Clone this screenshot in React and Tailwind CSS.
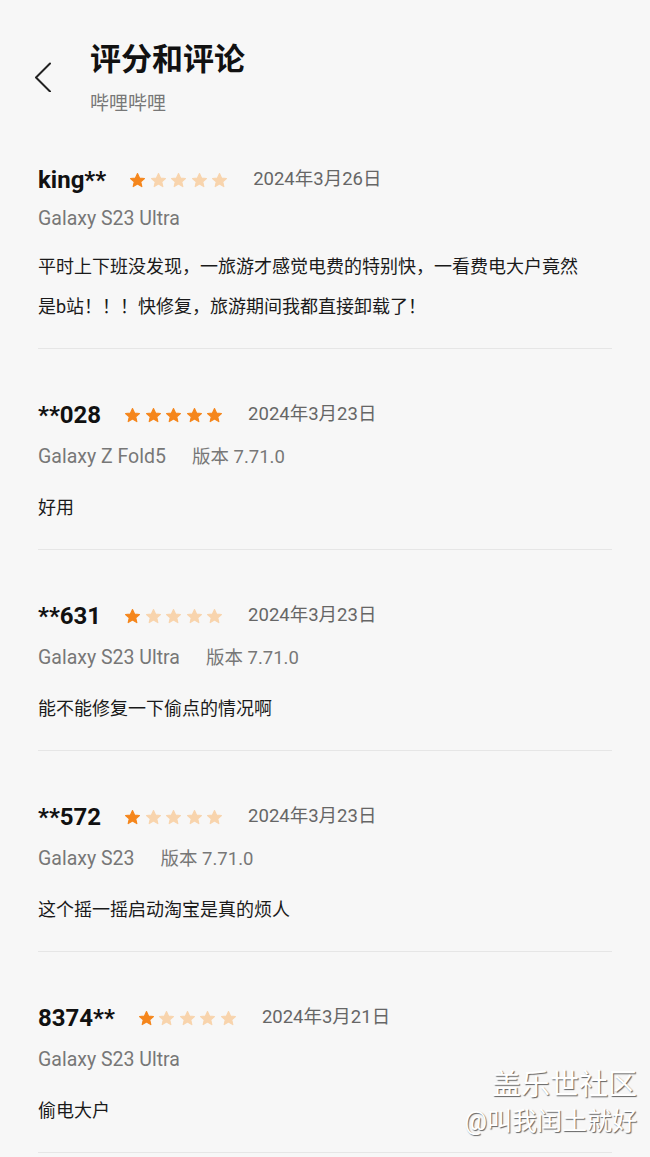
const reviews = [
  {
    id: 1,
    name: 'king**',
    rating: 1,
    date: '2024年3月26日',
    device: 'Galaxy S23 Ultra',
    text: ['平时上下班没发现，一旅游才感觉电费的特别快，一看费电大户竟然', '是b站！！！快修复，旅游期间我都直接卸载了！'],
  },
  { id: 2, name: '**028', rating: 5, date: '2024年3月23日', device: 'Galaxy Z Fold5', version: '版本 7.71.0', text: ['好用'] },
  { id: 3, name: '**631', rating: 1, date: '2024年3月23日', device: 'Galaxy S23 Ultra', version: '版本 7.71.0', text: ['能不能修复一下偷点的情况啊'] },
  { id: 4, name: '**572', rating: 1, date: '2024年3月23日', device: 'Galaxy S23', version: '版本 7.71.0', text: ['这个摇一摇启动淘宝是真的烦人'] },
  { id: 5, name: '8374**', rating: 1, date: '2024年3月21日', device: 'Galaxy S23 Ultra', text: ['偷电大户'] },
]

function Star({ filled }) {
  return (
    <svg width="17" height="17" viewBox="0 0 24 24" className="shrink-0">
      <path
        d="M12 2.2l2.9 6.3 6.9.7-5.2 4.6 1.5 6.8L12 17.1l-6.1 3.5 1.5-6.8-5.2-4.6 6.9-.7z"
        fill={filled ? '#f5861c' : '#f8d4ad'}
        stroke={filled ? '#f5861c' : '#f8d4ad'}
        strokeWidth="1.6"
        strokeLinejoin="round"
      />
    </svg>
  )
}

function Review({ review, first }) {
  return (
    <div className={`${first ? 'pt-[44px]' : 'pt-[48px]'} pb-[21px] border-b border-[#e6e6e6]`}>
      <div className="flex items-center h-[36px]">
        <span className="text-[24px] leading-[36px] font-bold text-[#111]">{review.name}</span>
        <div className="flex items-center gap-[3.5px] ml-[23px]">
          {[1, 2, 3, 4, 5].map((n) => (
            <Star key={n} filled={n <= review.rating} />
          ))}
        </div>
        <span className="ml-[25px] text-[18.5px] text-[#666]">{review.date}</span>
      </div>
      <div className={`flex items-baseline h-[28px] leading-[28px] ${first ? 'mt-[7px]' : 'mt-[10px]'} text-[#777]`}>
        <span className="text-[19.5px]">{review.device}</span>
        {review.version && <span className="ml-[26px] text-[18.5px]">{review.version}</span>}
      </div>
      <div className={`${first ? 'mt-[14px]' : 'mt-[17px]'} text-[18px] leading-[40px] text-[#1a1a1a]`}>
        {review.text.map((line, i) => (
          <div key={i}>{line}</div>
        ))}
      </div>
    </div>
  )
}

export default function App() {
  return (
    <div className="relative h-[1157px] overflow-hidden bg-[#f7f7f7] font-['Roboto','Noto_Sans_CJK_SC',sans-serif]">
      {/* 标题栏 */}
      <div className="flex pt-[40px]">
        <div className="w-[90px] pl-[34px] pt-[22px]">
          <svg width="18" height="30" viewBox="0 0 18 30" fill="none">
            <path d="M16 1.5 2 15.5l14 14" stroke="#222" strokeWidth="2" strokeLinecap="round" strokeLinejoin="round" />
          </svg>
        </div>
        <div>
          <h1 className="text-[31px] leading-[40px] font-bold text-[#111]">评分和评论</h1>
          <p className="mt-[10px] text-[19px] leading-[28px] text-[#777]">哔哩哔哩</p>
        </div>
      </div>

      <div className="mx-[38px]">
        {reviews.map((r, i) => (
          <Review key={r.id} review={r} first={i === 0} />
        ))}
      </div>

      {/* 水印 */}
      <div className="absolute right-[13px] top-[1066px] text-right text-white [text-shadow:1px_1px_1px_rgba(0,0,0,0.6)]">
        <div className="text-[29px] leading-[38px]">盖乐世社区</div>
        <div className="text-[25px] leading-[36px]">@叫我闰土就好</div>
      </div>
    </div>
  )
}
